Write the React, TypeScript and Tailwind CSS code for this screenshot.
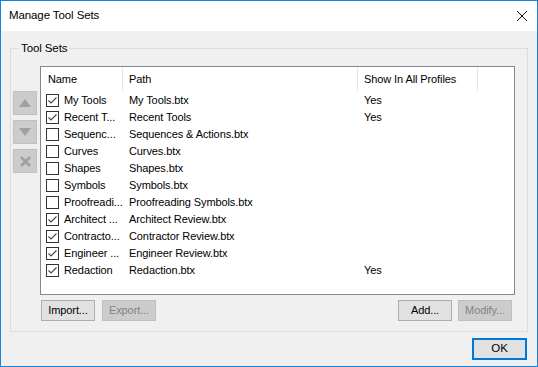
import React from 'react';

const rows = [
  { name: 'My Tools', path: 'My Tools.btx', checked: true, all: true },
  { name: 'Recent T...', path: 'Recent Tools', checked: true, all: true },
  { name: 'Sequenc...', path: 'Sequences & Actions.btx', checked: false, all: false },
  { name: 'Curves', path: 'Curves.btx', checked: false, all: false },
  { name: 'Shapes', path: 'Shapes.btx', checked: false, all: false },
  { name: 'Symbols', path: 'Symbols.btx', checked: false, all: false },
  { name: 'Proofreadi...', path: 'Proofreading Symbols.btx', checked: false, all: false },
  { name: 'Architect ...', path: 'Architect Review.btx', checked: true, all: false },
  { name: 'Contracto...', path: 'Contractor Review.btx', checked: true, all: false },
  { name: 'Engineer ...', path: 'Engineer Review.btx', checked: true, all: false },
  { name: 'Redaction', path: 'Redaction.btx', checked: true, all: true },
];

function Checkbox({ checked }: { checked: boolean }) {
  return (
    <div className="w-[13px] h-[13px] border border-[#333333] bg-white flex items-center justify-center shrink-0">
      {checked && (
        <svg width="11" height="11" viewBox="0 0 11 11">
          <path d="M1.5 5.5 L4 8 L9.5 2.5" fill="none" stroke="#444444" strokeWidth="1.1" />
        </svg>
      )}
    </div>
  );
}

function SideButton({ children }: { children: React.ReactNode }) {
  return (
    <div className="w-[24px] h-[24px] bg-[#cccccc] border border-[#bfbfbf] flex items-center justify-center">
      {children}
    </div>
  );
}

function Button({ label, disabled }: { label: string; disabled?: boolean }) {
  return (
    <div
      className={`w-[54px] h-[21px] flex items-center justify-center border ${
        disabled ? 'bg-[#cccccc] border-[#bfbfbf] text-[#838383]' : 'bg-[#e1e1e1] border-[#adadad] text-black'
      }`}
    >
      {label}
    </div>
  );
}

export default function App() {
  return (
    <div
      className="w-[538px] h-[367px] border border-[#1883d7] bg-[#f0f0f0] flex flex-col text-[11px] tracking-[-0.1px] text-black"
      style={{ fontFamily: '"Liberation Sans", Arial, sans-serif' }}
    >
      {/* Title bar */}
      <div className="h-[30px] bg-white flex items-center justify-between pl-[8px] pr-[9px] shrink-0">
        <span className="text-[11.5px] leading-none">Manage Tool Sets</span>
        <svg width="12" height="12" viewBox="0 0 12 12">
          <path d="M1 1 L11 11 M11 1 L1 11" stroke="#111111" strokeWidth="1" />
        </svg>
      </div>

      {/* Group */}
      <fieldset className="mt-[9px] ml-[9px] w-[518px] h-[292px] border border-[#dcdcdc] pl-[2px] pr-[12px] pt-[10px] pb-[9px] flex flex-col">
        <legend className="ml-[6px] px-[2px] leading-[16px] text-[11.5px]">Tool Sets</legend>
        <div className="flex gap-[3px]">
          <div className="flex flex-col gap-[5px] pt-[25px]">
            <SideButton>
              <svg width="12" height="8" viewBox="0 0 12 8">
                <path d="M6 0 L12 8 L0 8 Z" fill="#a0a0a0" />
              </svg>
            </SideButton>
            <SideButton>
              <svg width="12" height="8" viewBox="0 0 12 8">
                <path d="M0 0 L12 0 L6 8 Z" fill="#a0a0a0" />
              </svg>
            </SideButton>
            <SideButton>
              <svg width="11" height="11" viewBox="0 0 11 11">
                <path d="M1 1 L10 10 M10 1 L1 10" stroke="#a0a0a0" strokeWidth="2.6" />
              </svg>
            </SideButton>
          </div>

          <div className="w-[475px] h-[229px] border border-[#828790] bg-white flex flex-col">
            <div className="h-[24px] flex items-center shrink-0">
              <div className="w-[82px] pl-[7px] border-r border-[#e5e5e5] h-full flex items-center">Name</div>
              <div className="w-[235px] pl-[6px] border-r border-[#e5e5e5] h-full flex items-center">Path</div>
              <div className="w-[120px] pl-[6px] border-r border-[#e5e5e5] h-full flex items-center">
                Show In All Profiles
              </div>
            </div>
            <div className="flex flex-col pt-[1px]">
              {rows.map((r) => (
                <div key={r.name} className="h-[17px] flex items-center whitespace-nowrap">
                  <div className="w-[82px] pl-[5px] flex items-center gap-[5px]">
                    <Checkbox checked={r.checked} />
                    <span>{r.name}</span>
                  </div>
                  <div className="w-[235px] pl-[6px]">{r.path}</div>
                  <div className="w-[120px] pl-[6px]">{r.all ? 'Yes' : ''}</div>
                </div>
              ))}
            </div>
          </div>
        </div>

        <div className="flex items-center justify-between pl-[28px] pr-[3px] mt-[5px]">
          <div className="flex gap-[7px]">
            <Button label="Import..." />
            <Button label="Export..." disabled />
          </div>
          <div className="flex gap-[6px]">
            <Button label="Add..." />
            <Button label="Modify..." disabled />
          </div>
        </div>
      </fieldset>

      <div className="flex justify-end pr-[10px] mt-[6px]">
        <div className="w-[55px] h-[22px] flex items-center justify-center border-2 border-[#0078d7] bg-[#e1e1e1] text-[11.5px]">
          OK
        </div>
      </div>
    </div>
  );
}
